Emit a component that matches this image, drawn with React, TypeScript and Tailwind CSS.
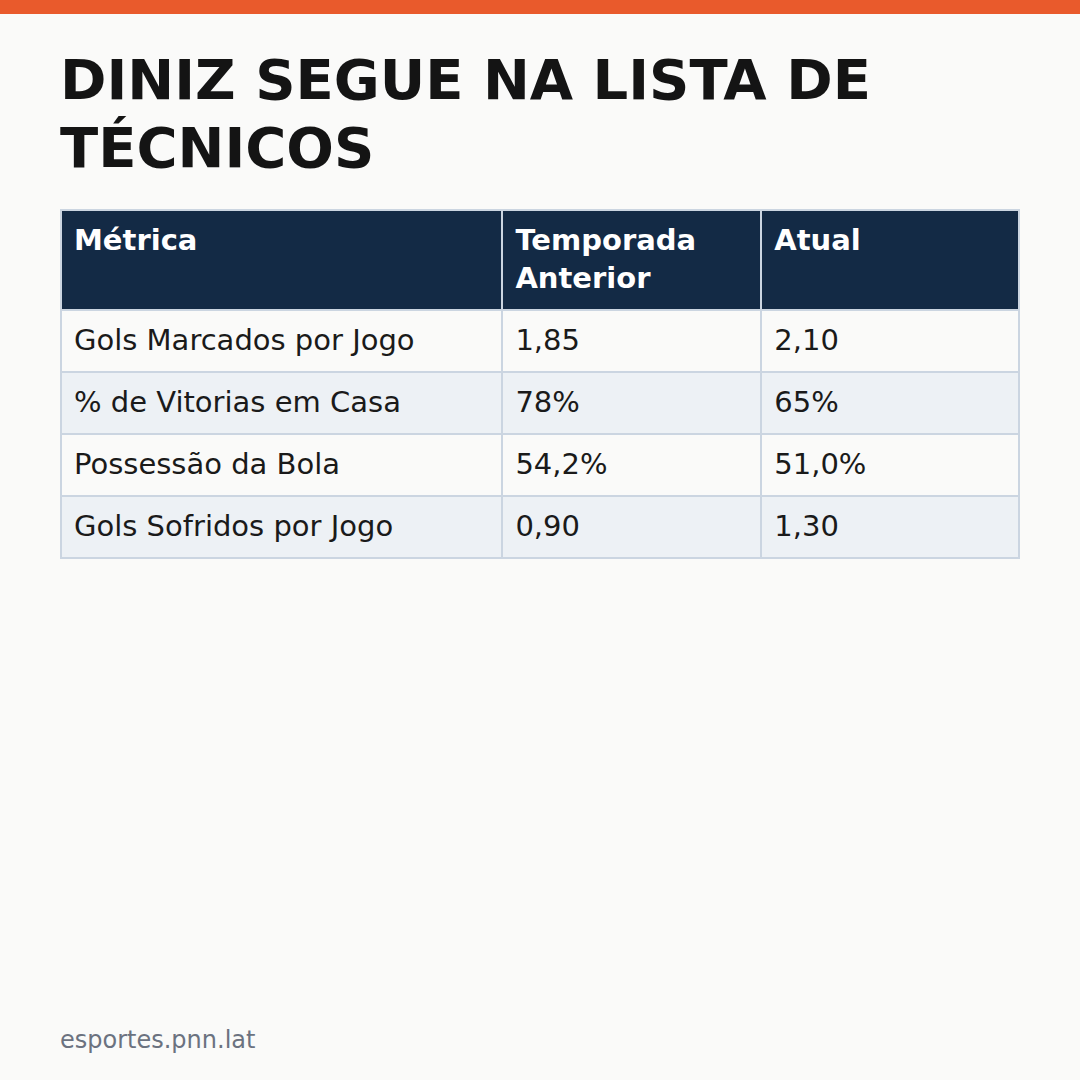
import React from "react";

const rows = [
  ["Gols Marcados por Jogo", "1,85", "2,10"],
  ["% de Vitorias em Casa", "78%", "65%"],
  ["Possessão da Bola", "54,2%", "51,0%"],
  ["Gols Sofridos por Jogo", "0,90", "1,30"],
];

export default function App() {
  return (
    <div
      className="w-[1080px] h-[1080px] bg-[#fafaf9] flex flex-col"
      style={{ fontFamily: '"DejaVu Sans", sans-serif' }}
    >
      <div className="h-[14px] bg-[#e95a2c]" />
      <div className="flex-1 flex flex-col px-[60px] pt-[32px]">
        <h1 className="text-[56px] font-bold leading-[68px] text-[#141414]">
          DINIZ SEGUE NA LISTA DE TÉCNICOS
        </h1>
        <table className="mt-[27px] w-[960px] border-collapse text-[29px] leading-[38px] text-[#1a1a1a]">
          <thead>
            <tr className="bg-[#132a45] text-white">
              <th className="w-[442px] border-2 border-[#cbd5e1] pl-[12px] pr-[12px] pt-[10px] pb-[12px] text-left align-top font-bold">
                Métrica
              </th>
              <th className="w-[259px] border-2 border-[#cbd5e1] pl-[12px] pr-[12px] pt-[10px] pb-[12px] text-left align-top font-bold">
                Temporada Anterior
              </th>
              <th className="w-[258px] border-2 border-[#cbd5e1] pl-[12px] pr-[12px] pt-[10px] pb-[12px] text-left align-top font-bold">
                Atual
              </th>
            </tr>
          </thead>
          <tbody>
            {rows.map((r, i) => (
              <tr key={i} className={i % 2 === 1 ? "bg-[#edf1f5]" : "bg-[#fafaf9]"}>
                {r.map((c, j) => (
                  <td key={j} className="h-[62px] border-2 border-[#cbd5e1] pl-[12px] pr-[12px] pt-[10px] pb-[12px] align-top">
                    {c}
                  </td>
                ))}
              </tr>
            ))}
          </tbody>
        </table>
        <div className="flex-1" />
        <div className="pb-[22px] text-[24px] text-[#6b7280]">esportes.pnn.lat</div>
      </div>
    </div>
  );
}
